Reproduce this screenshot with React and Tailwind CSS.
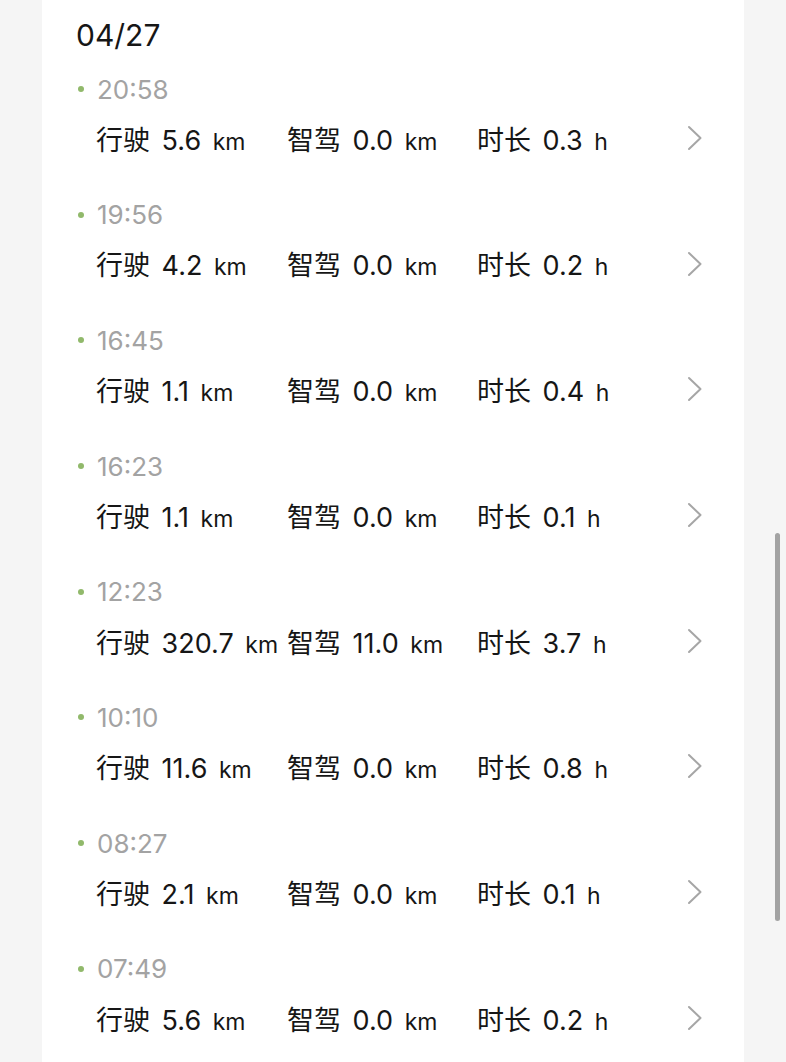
import React from "react";

const rows = [
  { t: "20:58", d: "5.6", s: "0.0", h: "0.3" },
  { t: "19:56", d: "4.2", s: "0.0", h: "0.2" },
  { t: "16:45", d: "1.1", s: "0.0", h: "0.4" },
  { t: "16:23", d: "1.1", s: "0.0", h: "0.1" },
  { t: "12:23", d: "320.7", s: "11.0", h: "3.7" },
  { t: "10:10", d: "11.6", s: "0.0", h: "0.8" },
  { t: "08:27", d: "2.1", s: "0.0", h: "0.1" },
  { t: "07:49", d: "5.6", s: "0.0", h: "0.2" },
];

function Cell({ label, value, unit }) {
  return (
    <div className="whitespace-nowrap [word-spacing:4px]">
      <span className="text-[27px]">{label} {value} </span>
      <span className="text-[23px]">{unit}</span>
    </div>
  );
}

function Chevron() {
  return (
    <svg width="16" height="26" viewBox="0 0 16 26" fill="none">
      <path d="M2 2 L13.5 13 L2 24" stroke="#a6a6a6" strokeWidth="2" strokeLinecap="round" strokeLinejoin="round" />
    </svg>
  );
}

export default function App() {
  return (
    <div
      className="relative min-h-[1062px] h-[1062px] overflow-hidden bg-[#f5f5f5]"
      style={{ fontFamily: 'Inter, "Noto Sans CJK SC", sans-serif' }}
    >
      <div className="ml-[42px] w-[702px] h-full bg-white pt-[17px] pl-[34px] text-[#161616]">
        <div className="h-[36px] leading-[36px] text-[30px]">04/27</div>
        <div className="mt-[18px] flex flex-col gap-[37.7px]">
          {rows.map((r) => (
            <div key={r.t} className="flex flex-col">
              <div className="flex h-[36px] items-center">
                <span className="ml-[2px] h-[6px] w-[6px] rounded-full bg-[#91b96b]" />
                <span className="ml-[13px] text-[26px] text-[#a3a3a3]">{r.t}</span>
              </div>
              <div className="mt-[16px] flex h-[36px] items-center pl-[20px]">
                <div className="grid grid-cols-[191px_190px_190px] items-center">
                  <Cell label="行驶" value={r.d} unit="km" />
                  <Cell label="智驾" value={r.s} unit="km" />
                  <Cell label="时长" value={r.h} unit="h" />
                </div>
                <div className="ml-[20px] -mt-[6px]">
                  <Chevron />
                </div>
              </div>
            </div>
          ))}
        </div>
      </div>
      <div className="absolute left-[775px] top-[533px] h-[388px] w-[5px] rounded-full bg-[#a3a3a3]" />
    </div>
  );
}
